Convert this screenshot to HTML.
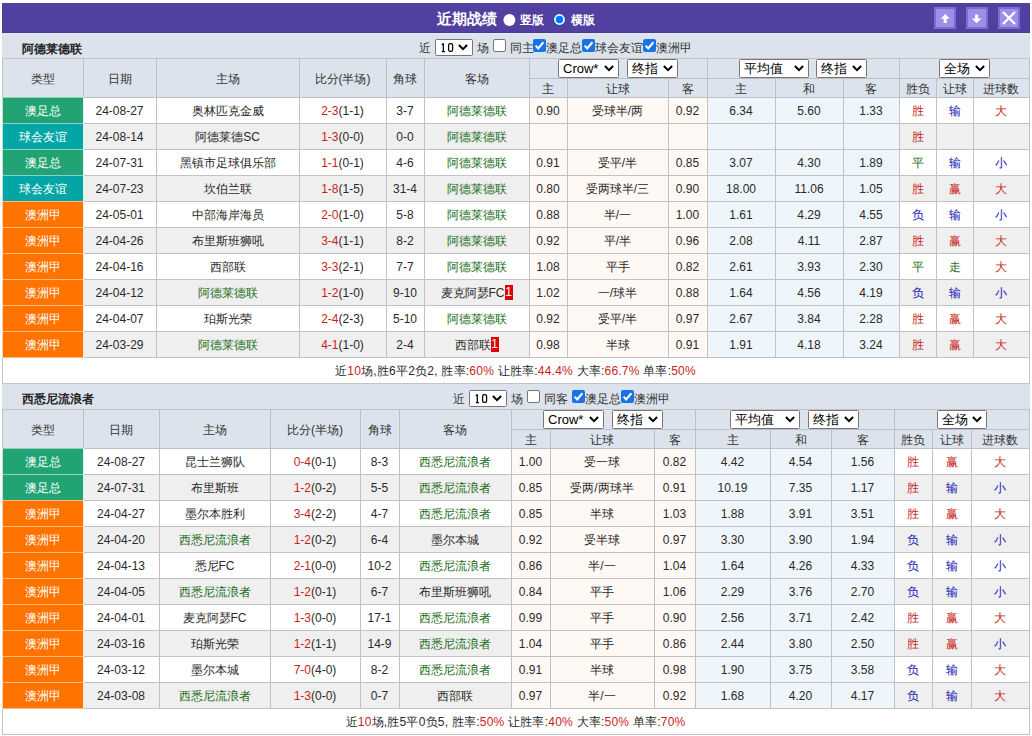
<!DOCTYPE html><html><head><meta charset="utf-8"><style>
html,body{margin:0;padding:0;background:#fff;width:1032px;height:736px;overflow:hidden;font-family:"Liberation Sans", sans-serif}
.a{position:absolute}
.t{position:absolute;display:flex;align-items:center;justify-content:center;font-size:12px;color:#2a2a2a;white-space:nowrap}
.r{color:#C81E22}.b{color:#1414B4}.g{color:#1C6E1C}
.rc{display:inline-block;position:relative;top:-1px;background:#E00000;color:#fff;width:8px;height:15px;line-height:15px;text-align:center;font-size:12px}
</style></head><body>
<div class="a" style="left:2px;top:3px;width:1028px;height:29px;background:#5240A0;"></div>
<div class="a" style="left:2px;top:32px;width:1028px;height:1px;background:#483C86;"></div>
<div class="a" style="left:2px;top:33px;width:1028px;height:1px;background:#E6E6FC;"></div>
<div class="a" style="left:2px;top:34px;width:1028px;height:700px;background:#DCE3EC;"></div>
<div class="a" style="left:437px;top:4px;height:30px;line-height:30px;font-size:15px;font-weight:bold;color:#fff;white-space:nowrap">近期战绩</div>
<svg class="a" style="left:500px;top:10px" width="20" height="20" viewBox="0 0 20 20"><circle cx="9.4" cy="9.9" r="6" fill="#fff"/></svg>
<div class="a" style="left:520px;top:5px;height:30px;line-height:30px;font-size:12px;color:#2a2a2a;white-space:nowrap;color:#fff;font-weight:bold">竖版</div>
<svg class="a" style="left:550px;top:10px" width="20" height="20" viewBox="0 0 20 20"><circle cx="9.5" cy="9.5" r="6.5" fill="#2450C8" opacity="0.7"/><circle cx="9.5" cy="9.5" r="5.4" fill="#EFFFFF"/><circle cx="9.5" cy="9.5" r="3.7" fill="#0075FF"/></svg>
<div class="a" style="left:571px;top:5px;height:30px;line-height:30px;font-size:12px;color:#2a2a2a;white-space:nowrap;color:#fff;font-weight:bold">横版</div>
<div class="a" style="left:934px;top:7px;width:22px;height:22px;box-sizing:border-box;background:#9E8EEA;border:2px solid #7E6CCC"></div>
<svg class="a" style="left:934px;top:7px" width="22" height="22" viewBox="0 0 22 22"><polygon points="11.2,7 15.8,11.8 12.7,11.8 12.7,16 9.7,16 9.7,11.8 6.6,11.8" fill="#fff"/></svg>
<div class="a" style="left:966px;top:7px;width:22px;height:22px;box-sizing:border-box;background:#9E8EEA;border:2px solid #7E6CCC"></div>
<svg class="a" style="left:966px;top:7px" width="22" height="22" viewBox="0 0 22 22"><polygon points="10.6,16.2 15.4,11.4 12.1,11.4 12.1,7.5 9.1,7.5 9.1,11.4 5.8,11.4" fill="#fff"/></svg>
<div class="a" style="left:998px;top:7px;width:22px;height:22px;box-sizing:border-box;background:#9E8EEA;border:2px solid #7E6CCC"></div>
<svg class="a" style="left:998px;top:7px" width="22" height="22" viewBox="0 0 22 22"><path d="M5,5 L17,17 M17,5 L5,17" stroke="#fff" stroke-width="2.3"/></svg>
<div class="a" style="left:2px;top:58px;width:1027px;height:39px;background:#DCE3EC;"></div>
<div class="a" style="left:2px;top:97px;width:1027px;height:26px;background:#FFFFFF;"></div>
<div class="a" style="left:529px;top:97px;width:178px;height:26px;background:#FFF9F5;"></div>
<div class="a" style="left:707px;top:97px;width:192px;height:26px;background:#EFF6FB;"></div>
<div class="a" style="left:2px;top:123px;width:1027px;height:26px;background:#EFEFEF;"></div>
<div class="a" style="left:529px;top:123px;width:178px;height:26px;background:#FFF9F5;"></div>
<div class="a" style="left:707px;top:123px;width:192px;height:26px;background:#EFF6FB;"></div>
<div class="a" style="left:2px;top:149px;width:1027px;height:26px;background:#FFFFFF;"></div>
<div class="a" style="left:529px;top:149px;width:178px;height:26px;background:#FFF9F5;"></div>
<div class="a" style="left:707px;top:149px;width:192px;height:26px;background:#EFF6FB;"></div>
<div class="a" style="left:2px;top:175px;width:1027px;height:26px;background:#EFEFEF;"></div>
<div class="a" style="left:529px;top:175px;width:178px;height:26px;background:#FFF9F5;"></div>
<div class="a" style="left:707px;top:175px;width:192px;height:26px;background:#EFF6FB;"></div>
<div class="a" style="left:2px;top:201px;width:1027px;height:26px;background:#FFFFFF;"></div>
<div class="a" style="left:529px;top:201px;width:178px;height:26px;background:#FFF9F5;"></div>
<div class="a" style="left:707px;top:201px;width:192px;height:26px;background:#EFF6FB;"></div>
<div class="a" style="left:2px;top:227px;width:1027px;height:26px;background:#EFEFEF;"></div>
<div class="a" style="left:529px;top:227px;width:178px;height:26px;background:#FFF9F5;"></div>
<div class="a" style="left:707px;top:227px;width:192px;height:26px;background:#EFF6FB;"></div>
<div class="a" style="left:2px;top:253px;width:1027px;height:26px;background:#FFFFFF;"></div>
<div class="a" style="left:529px;top:253px;width:178px;height:26px;background:#FFF9F5;"></div>
<div class="a" style="left:707px;top:253px;width:192px;height:26px;background:#EFF6FB;"></div>
<div class="a" style="left:2px;top:279px;width:1027px;height:26px;background:#EFEFEF;"></div>
<div class="a" style="left:529px;top:279px;width:178px;height:26px;background:#FFF9F5;"></div>
<div class="a" style="left:707px;top:279px;width:192px;height:26px;background:#EFF6FB;"></div>
<div class="a" style="left:2px;top:305px;width:1027px;height:26px;background:#FFFFFF;"></div>
<div class="a" style="left:529px;top:305px;width:178px;height:26px;background:#FFF9F5;"></div>
<div class="a" style="left:707px;top:305px;width:192px;height:26px;background:#EFF6FB;"></div>
<div class="a" style="left:2px;top:331px;width:1027px;height:26px;background:#EFEFEF;"></div>
<div class="a" style="left:529px;top:331px;width:178px;height:26px;background:#FFF9F5;"></div>
<div class="a" style="left:707px;top:331px;width:192px;height:26px;background:#EFF6FB;"></div>
<div class="a" style="left:2px;top:357px;width:1027px;height:26px;background:#FFFFFF;"></div>
<div class="a" style="left:2px;top:58px;width:1028px;height:1px;background:#C2C2C2;"></div>
<div class="a" style="left:2px;top:97px;width:1028px;height:1px;background:#C2C2C2;"></div>
<div class="a" style="left:2px;top:123px;width:1028px;height:1px;background:#C2C2C2;"></div>
<div class="a" style="left:2px;top:149px;width:1028px;height:1px;background:#C2C2C2;"></div>
<div class="a" style="left:2px;top:175px;width:1028px;height:1px;background:#C2C2C2;"></div>
<div class="a" style="left:2px;top:201px;width:1028px;height:1px;background:#C2C2C2;"></div>
<div class="a" style="left:2px;top:227px;width:1028px;height:1px;background:#C2C2C2;"></div>
<div class="a" style="left:2px;top:253px;width:1028px;height:1px;background:#C2C2C2;"></div>
<div class="a" style="left:2px;top:279px;width:1028px;height:1px;background:#C2C2C2;"></div>
<div class="a" style="left:2px;top:305px;width:1028px;height:1px;background:#C2C2C2;"></div>
<div class="a" style="left:2px;top:331px;width:1028px;height:1px;background:#C2C2C2;"></div>
<div class="a" style="left:2px;top:357px;width:1028px;height:1px;background:#C2C2C2;"></div>
<div class="a" style="left:2px;top:383px;width:1028px;height:1px;background:#C2C2C2;"></div>
<div class="a" style="left:529px;top:78px;width:500px;height:1px;background:#C2C2C2;"></div>
<div class="a" style="left:2px;top:58px;width:1px;height:326px;background:#C2C2C2;"></div>
<div class="a" style="left:83px;top:58px;width:1px;height:39px;background:#B9C0CA;"></div>
<div class="a" style="left:83px;top:98px;width:1px;height:259px;background:#C2C2C2;"></div>
<div class="a" style="left:156px;top:58px;width:1px;height:39px;background:#B9C0CA;"></div>
<div class="a" style="left:156px;top:98px;width:1px;height:259px;background:#C2C2C2;"></div>
<div class="a" style="left:299px;top:58px;width:1px;height:39px;background:#B9C0CA;"></div>
<div class="a" style="left:299px;top:98px;width:1px;height:259px;background:#C2C2C2;"></div>
<div class="a" style="left:386px;top:58px;width:1px;height:39px;background:#B9C0CA;"></div>
<div class="a" style="left:386px;top:98px;width:1px;height:259px;background:#C2C2C2;"></div>
<div class="a" style="left:424px;top:58px;width:1px;height:39px;background:#B9C0CA;"></div>
<div class="a" style="left:424px;top:98px;width:1px;height:259px;background:#C2C2C2;"></div>
<div class="a" style="left:529px;top:58px;width:1px;height:39px;background:#B9C0CA;"></div>
<div class="a" style="left:529px;top:98px;width:1px;height:259px;background:#C2C2C2;"></div>
<div class="a" style="left:567px;top:78px;width:1px;height:19px;background:#B9C0CA;"></div>
<div class="a" style="left:567px;top:98px;width:1px;height:259px;background:#C2C2C2;"></div>
<div class="a" style="left:668px;top:78px;width:1px;height:19px;background:#B9C0CA;"></div>
<div class="a" style="left:668px;top:98px;width:1px;height:259px;background:#C2C2C2;"></div>
<div class="a" style="left:707px;top:58px;width:1px;height:39px;background:#B9C0CA;"></div>
<div class="a" style="left:707px;top:98px;width:1px;height:259px;background:#C2C2C2;"></div>
<div class="a" style="left:775px;top:78px;width:1px;height:19px;background:#B9C0CA;"></div>
<div class="a" style="left:775px;top:98px;width:1px;height:259px;background:#C2C2C2;"></div>
<div class="a" style="left:843px;top:78px;width:1px;height:19px;background:#B9C0CA;"></div>
<div class="a" style="left:843px;top:98px;width:1px;height:259px;background:#C2C2C2;"></div>
<div class="a" style="left:899px;top:58px;width:1px;height:39px;background:#B9C0CA;"></div>
<div class="a" style="left:899px;top:98px;width:1px;height:259px;background:#C2C2C2;"></div>
<div class="a" style="left:936px;top:78px;width:1px;height:19px;background:#B9C0CA;"></div>
<div class="a" style="left:936px;top:98px;width:1px;height:259px;background:#C2C2C2;"></div>
<div class="a" style="left:973px;top:78px;width:1px;height:19px;background:#B9C0CA;"></div>
<div class="a" style="left:973px;top:98px;width:1px;height:259px;background:#C2C2C2;"></div>
<div class="a" style="left:1029px;top:58px;width:1px;height:326px;background:#C2C2C2;"></div>
<div class="a" style="left:3px;top:97px;width:1026px;height:1px;background:#B9C0CA;"></div>
<div class="a" style="left:530px;top:78px;width:499px;height:1px;background:#B9C0CA;"></div>
<div class="a" style="left:2px;top:97px;width:82px;height:27px;background:#21A374;"></div>
<div class="a" style="left:2px;top:97px;width:1px;height:27px;background:rgba(255,255,255,0.7);"></div>
<div class="a" style="left:83px;top:97px;width:1px;height:27px;background:rgba(255,255,255,0.85);"></div>
<div class="a" style="left:3px;top:97px;width:80px;height:1px;background:rgba(255,255,255,0.5);"></div>
<div class="a" style="left:2px;top:123px;width:82px;height:27px;background:#03A5A5;"></div>
<div class="a" style="left:2px;top:123px;width:1px;height:27px;background:rgba(255,255,255,0.7);"></div>
<div class="a" style="left:83px;top:123px;width:1px;height:27px;background:rgba(255,255,255,0.85);"></div>
<div class="a" style="left:3px;top:123px;width:80px;height:1px;background:rgba(255,255,255,0.5);"></div>
<div class="a" style="left:2px;top:149px;width:82px;height:27px;background:#21A374;"></div>
<div class="a" style="left:2px;top:149px;width:1px;height:27px;background:rgba(255,255,255,0.7);"></div>
<div class="a" style="left:83px;top:149px;width:1px;height:27px;background:rgba(255,255,255,0.85);"></div>
<div class="a" style="left:3px;top:149px;width:80px;height:1px;background:rgba(255,255,255,0.5);"></div>
<div class="a" style="left:2px;top:175px;width:82px;height:27px;background:#03A5A5;"></div>
<div class="a" style="left:2px;top:175px;width:1px;height:27px;background:rgba(255,255,255,0.7);"></div>
<div class="a" style="left:83px;top:175px;width:1px;height:27px;background:rgba(255,255,255,0.85);"></div>
<div class="a" style="left:3px;top:175px;width:80px;height:1px;background:rgba(255,255,255,0.5);"></div>
<div class="a" style="left:2px;top:201px;width:82px;height:27px;background:#FF7300;"></div>
<div class="a" style="left:2px;top:201px;width:1px;height:27px;background:rgba(255,255,255,0.7);"></div>
<div class="a" style="left:83px;top:201px;width:1px;height:27px;background:rgba(255,255,255,0.85);"></div>
<div class="a" style="left:3px;top:201px;width:80px;height:1px;background:rgba(255,255,255,0.5);"></div>
<div class="a" style="left:2px;top:227px;width:82px;height:27px;background:#FF7300;"></div>
<div class="a" style="left:2px;top:227px;width:1px;height:27px;background:rgba(255,255,255,0.7);"></div>
<div class="a" style="left:83px;top:227px;width:1px;height:27px;background:rgba(255,255,255,0.85);"></div>
<div class="a" style="left:3px;top:227px;width:80px;height:1px;background:rgba(255,255,255,0.5);"></div>
<div class="a" style="left:2px;top:253px;width:82px;height:27px;background:#FF7300;"></div>
<div class="a" style="left:2px;top:253px;width:1px;height:27px;background:rgba(255,255,255,0.7);"></div>
<div class="a" style="left:83px;top:253px;width:1px;height:27px;background:rgba(255,255,255,0.85);"></div>
<div class="a" style="left:3px;top:253px;width:80px;height:1px;background:rgba(255,255,255,0.5);"></div>
<div class="a" style="left:2px;top:279px;width:82px;height:27px;background:#FF7300;"></div>
<div class="a" style="left:2px;top:279px;width:1px;height:27px;background:rgba(255,255,255,0.7);"></div>
<div class="a" style="left:83px;top:279px;width:1px;height:27px;background:rgba(255,255,255,0.85);"></div>
<div class="a" style="left:3px;top:279px;width:80px;height:1px;background:rgba(255,255,255,0.5);"></div>
<div class="a" style="left:2px;top:305px;width:82px;height:27px;background:#FF7300;"></div>
<div class="a" style="left:2px;top:305px;width:1px;height:27px;background:rgba(255,255,255,0.7);"></div>
<div class="a" style="left:83px;top:305px;width:1px;height:27px;background:rgba(255,255,255,0.85);"></div>
<div class="a" style="left:3px;top:305px;width:80px;height:1px;background:rgba(255,255,255,0.5);"></div>
<div class="a" style="left:2px;top:331px;width:82px;height:27px;background:#FF7300;"></div>
<div class="a" style="left:2px;top:331px;width:1px;height:27px;background:rgba(255,255,255,0.7);"></div>
<div class="a" style="left:83px;top:331px;width:1px;height:27px;background:rgba(255,255,255,0.85);"></div>
<div class="a" style="left:3px;top:331px;width:80px;height:1px;background:rgba(255,255,255,0.5);"></div>
<div class="a" style="left:3px;top:357px;width:80px;height:1px;background:rgba(255,255,255,0.5);"></div>
<div class="t" style="left:2px;top:60px;width:81px;height:39px;color:#333"><span>类型</span></div>
<div class="t" style="left:83px;top:60px;width:73px;height:39px;color:#333"><span>日期</span></div>
<div class="t" style="left:156px;top:60px;width:143px;height:39px;color:#333"><span>主场</span></div>
<div class="t" style="left:299px;top:60px;width:87px;height:39px;color:#333"><span>比分(半场)</span></div>
<div class="t" style="left:386px;top:60px;width:38px;height:39px;color:#333"><span>角球</span></div>
<div class="t" style="left:424px;top:60px;width:105px;height:39px;color:#333"><span>客场</span></div>
<div class="t" style="left:529px;top:80px;width:38px;height:19px;color:#333"><span>主</span></div>
<div class="t" style="left:567px;top:80px;width:101px;height:19px;color:#333"><span>让球</span></div>
<div class="t" style="left:668px;top:80px;width:39px;height:19px;color:#333"><span>客</span></div>
<div class="t" style="left:707px;top:80px;width:68px;height:19px;color:#333"><span>主</span></div>
<div class="t" style="left:775px;top:80px;width:68px;height:19px;color:#333"><span>和</span></div>
<div class="t" style="left:843px;top:80px;width:56px;height:19px;color:#333"><span>客</span></div>
<div class="t" style="left:899px;top:80px;width:37px;height:19px;color:#333"><span>胜负</span></div>
<div class="t" style="left:936px;top:80px;width:37px;height:19px;color:#333"><span>让球</span></div>
<div class="t" style="left:973px;top:80px;width:56px;height:19px;color:#333"><span>进球数</span></div>
<div class="t" style="left:2px;top:98px;width:81px;height:26px;color:#fff"><span>澳足总</span></div>
<div class="t" style="left:83px;top:98px;width:73px;height:26px;"><span>24-08-27</span></div>
<div class="t" style="left:156px;top:98px;width:143px;height:26px;"><span>奥林匹克金威</span></div>
<div class="t" style="left:299px;top:98px;width:87px;height:26px;"><span><span class="r">2-3</span>(1-1)</span></div>
<div class="t" style="left:386px;top:98px;width:38px;height:26px;"><span>3-7</span></div>
<div class="t" style="left:424px;top:98px;width:105px;height:26px;"><span><span class="g">阿德莱德联</span></span></div>
<div class="t" style="left:529px;top:98px;width:38px;height:26px;"><span>0.90</span></div>
<div class="t" style="left:567px;top:98px;width:101px;height:26px;"><span>受球半/两</span></div>
<div class="t" style="left:668px;top:98px;width:39px;height:26px;"><span>0.92</span></div>
<div class="t" style="left:707px;top:98px;width:68px;height:26px;"><span>6.34</span></div>
<div class="t" style="left:775px;top:98px;width:68px;height:26px;"><span>5.60</span></div>
<div class="t" style="left:843px;top:98px;width:56px;height:26px;"><span>1.33</span></div>
<div class="t" style="left:899px;top:98px;width:37px;height:26px;"><span><span class="r">胜</span></span></div>
<div class="t" style="left:936px;top:98px;width:37px;height:26px;"><span><span class="b">输</span></span></div>
<div class="t" style="left:973px;top:98px;width:56px;height:26px;"><span><span class="r">大</span></span></div>
<div class="t" style="left:2px;top:124px;width:81px;height:26px;color:#fff"><span>球会友谊</span></div>
<div class="t" style="left:83px;top:124px;width:73px;height:26px;"><span>24-08-14</span></div>
<div class="t" style="left:156px;top:124px;width:143px;height:26px;"><span>阿德莱德SC</span></div>
<div class="t" style="left:299px;top:124px;width:87px;height:26px;"><span><span class="r">1-3</span>(0-0)</span></div>
<div class="t" style="left:386px;top:124px;width:38px;height:26px;"><span>0-0</span></div>
<div class="t" style="left:424px;top:124px;width:105px;height:26px;"><span><span class="g">阿德莱德联</span></span></div>
<div class="t" style="left:529px;top:124px;width:38px;height:26px;"><span></span></div>
<div class="t" style="left:567px;top:124px;width:101px;height:26px;"><span></span></div>
<div class="t" style="left:668px;top:124px;width:39px;height:26px;"><span></span></div>
<div class="t" style="left:707px;top:124px;width:68px;height:26px;"><span></span></div>
<div class="t" style="left:775px;top:124px;width:68px;height:26px;"><span></span></div>
<div class="t" style="left:843px;top:124px;width:56px;height:26px;"><span></span></div>
<div class="t" style="left:899px;top:124px;width:37px;height:26px;"><span><span class="r">胜</span></span></div>
<div class="t" style="left:936px;top:124px;width:37px;height:26px;"><span></span></div>
<div class="t" style="left:973px;top:124px;width:56px;height:26px;"><span></span></div>
<div class="t" style="left:2px;top:150px;width:81px;height:26px;color:#fff"><span>澳足总</span></div>
<div class="t" style="left:83px;top:150px;width:73px;height:26px;"><span>24-07-31</span></div>
<div class="t" style="left:156px;top:150px;width:143px;height:26px;"><span>黑镇市足球俱乐部</span></div>
<div class="t" style="left:299px;top:150px;width:87px;height:26px;"><span><span class="r">1-1</span>(0-1)</span></div>
<div class="t" style="left:386px;top:150px;width:38px;height:26px;"><span>4-6</span></div>
<div class="t" style="left:424px;top:150px;width:105px;height:26px;"><span><span class="g">阿德莱德联</span></span></div>
<div class="t" style="left:529px;top:150px;width:38px;height:26px;"><span>0.91</span></div>
<div class="t" style="left:567px;top:150px;width:101px;height:26px;"><span>受平/半</span></div>
<div class="t" style="left:668px;top:150px;width:39px;height:26px;"><span>0.85</span></div>
<div class="t" style="left:707px;top:150px;width:68px;height:26px;"><span>3.07</span></div>
<div class="t" style="left:775px;top:150px;width:68px;height:26px;"><span>4.30</span></div>
<div class="t" style="left:843px;top:150px;width:56px;height:26px;"><span>1.89</span></div>
<div class="t" style="left:899px;top:150px;width:37px;height:26px;"><span><span class="g">平</span></span></div>
<div class="t" style="left:936px;top:150px;width:37px;height:26px;"><span><span class="b">输</span></span></div>
<div class="t" style="left:973px;top:150px;width:56px;height:26px;"><span><span class="b">小</span></span></div>
<div class="t" style="left:2px;top:176px;width:81px;height:26px;color:#fff"><span>球会友谊</span></div>
<div class="t" style="left:83px;top:176px;width:73px;height:26px;"><span>24-07-23</span></div>
<div class="t" style="left:156px;top:176px;width:143px;height:26px;"><span>坎伯兰联</span></div>
<div class="t" style="left:299px;top:176px;width:87px;height:26px;"><span><span class="r">1-8</span>(1-5)</span></div>
<div class="t" style="left:386px;top:176px;width:38px;height:26px;"><span>31-4</span></div>
<div class="t" style="left:424px;top:176px;width:105px;height:26px;"><span><span class="g">阿德莱德联</span></span></div>
<div class="t" style="left:529px;top:176px;width:38px;height:26px;"><span>0.80</span></div>
<div class="t" style="left:567px;top:176px;width:101px;height:26px;"><span>受两球半/三</span></div>
<div class="t" style="left:668px;top:176px;width:39px;height:26px;"><span>0.90</span></div>
<div class="t" style="left:707px;top:176px;width:68px;height:26px;"><span>18.00</span></div>
<div class="t" style="left:775px;top:176px;width:68px;height:26px;"><span>11.06</span></div>
<div class="t" style="left:843px;top:176px;width:56px;height:26px;"><span>1.05</span></div>
<div class="t" style="left:899px;top:176px;width:37px;height:26px;"><span><span class="r">胜</span></span></div>
<div class="t" style="left:936px;top:176px;width:37px;height:26px;"><span><span class="r">赢</span></span></div>
<div class="t" style="left:973px;top:176px;width:56px;height:26px;"><span><span class="r">大</span></span></div>
<div class="t" style="left:2px;top:202px;width:81px;height:26px;color:#fff"><span>澳洲甲</span></div>
<div class="t" style="left:83px;top:202px;width:73px;height:26px;"><span>24-05-01</span></div>
<div class="t" style="left:156px;top:202px;width:143px;height:26px;"><span>中部海岸海员</span></div>
<div class="t" style="left:299px;top:202px;width:87px;height:26px;"><span><span class="r">2-0</span>(1-0)</span></div>
<div class="t" style="left:386px;top:202px;width:38px;height:26px;"><span>5-8</span></div>
<div class="t" style="left:424px;top:202px;width:105px;height:26px;"><span><span class="g">阿德莱德联</span></span></div>
<div class="t" style="left:529px;top:202px;width:38px;height:26px;"><span>0.88</span></div>
<div class="t" style="left:567px;top:202px;width:101px;height:26px;"><span>半/一</span></div>
<div class="t" style="left:668px;top:202px;width:39px;height:26px;"><span>1.00</span></div>
<div class="t" style="left:707px;top:202px;width:68px;height:26px;"><span>1.61</span></div>
<div class="t" style="left:775px;top:202px;width:68px;height:26px;"><span>4.29</span></div>
<div class="t" style="left:843px;top:202px;width:56px;height:26px;"><span>4.55</span></div>
<div class="t" style="left:899px;top:202px;width:37px;height:26px;"><span><span class="b">负</span></span></div>
<div class="t" style="left:936px;top:202px;width:37px;height:26px;"><span><span class="b">输</span></span></div>
<div class="t" style="left:973px;top:202px;width:56px;height:26px;"><span><span class="b">小</span></span></div>
<div class="t" style="left:2px;top:228px;width:81px;height:26px;color:#fff"><span>澳洲甲</span></div>
<div class="t" style="left:83px;top:228px;width:73px;height:26px;"><span>24-04-26</span></div>
<div class="t" style="left:156px;top:228px;width:143px;height:26px;"><span>布里斯班狮吼</span></div>
<div class="t" style="left:299px;top:228px;width:87px;height:26px;"><span><span class="r">3-4</span>(1-1)</span></div>
<div class="t" style="left:386px;top:228px;width:38px;height:26px;"><span>8-2</span></div>
<div class="t" style="left:424px;top:228px;width:105px;height:26px;"><span><span class="g">阿德莱德联</span></span></div>
<div class="t" style="left:529px;top:228px;width:38px;height:26px;"><span>0.92</span></div>
<div class="t" style="left:567px;top:228px;width:101px;height:26px;"><span>平/半</span></div>
<div class="t" style="left:668px;top:228px;width:39px;height:26px;"><span>0.96</span></div>
<div class="t" style="left:707px;top:228px;width:68px;height:26px;"><span>2.08</span></div>
<div class="t" style="left:775px;top:228px;width:68px;height:26px;"><span>4.11</span></div>
<div class="t" style="left:843px;top:228px;width:56px;height:26px;"><span>2.87</span></div>
<div class="t" style="left:899px;top:228px;width:37px;height:26px;"><span><span class="r">胜</span></span></div>
<div class="t" style="left:936px;top:228px;width:37px;height:26px;"><span><span class="r">赢</span></span></div>
<div class="t" style="left:973px;top:228px;width:56px;height:26px;"><span><span class="r">大</span></span></div>
<div class="t" style="left:2px;top:254px;width:81px;height:26px;color:#fff"><span>澳洲甲</span></div>
<div class="t" style="left:83px;top:254px;width:73px;height:26px;"><span>24-04-16</span></div>
<div class="t" style="left:156px;top:254px;width:143px;height:26px;"><span>西部联</span></div>
<div class="t" style="left:299px;top:254px;width:87px;height:26px;"><span><span class="r">3-3</span>(2-1)</span></div>
<div class="t" style="left:386px;top:254px;width:38px;height:26px;"><span>7-7</span></div>
<div class="t" style="left:424px;top:254px;width:105px;height:26px;"><span><span class="g">阿德莱德联</span></span></div>
<div class="t" style="left:529px;top:254px;width:38px;height:26px;"><span>1.08</span></div>
<div class="t" style="left:567px;top:254px;width:101px;height:26px;"><span>平手</span></div>
<div class="t" style="left:668px;top:254px;width:39px;height:26px;"><span>0.82</span></div>
<div class="t" style="left:707px;top:254px;width:68px;height:26px;"><span>2.61</span></div>
<div class="t" style="left:775px;top:254px;width:68px;height:26px;"><span>3.93</span></div>
<div class="t" style="left:843px;top:254px;width:56px;height:26px;"><span>2.30</span></div>
<div class="t" style="left:899px;top:254px;width:37px;height:26px;"><span><span class="g">平</span></span></div>
<div class="t" style="left:936px;top:254px;width:37px;height:26px;"><span><span class="g">走</span></span></div>
<div class="t" style="left:973px;top:254px;width:56px;height:26px;"><span><span class="r">大</span></span></div>
<div class="t" style="left:2px;top:280px;width:81px;height:26px;color:#fff"><span>澳洲甲</span></div>
<div class="t" style="left:83px;top:280px;width:73px;height:26px;"><span>24-04-12</span></div>
<div class="t" style="left:156px;top:280px;width:143px;height:26px;"><span><span class="g">阿德莱德联</span></span></div>
<div class="t" style="left:299px;top:280px;width:87px;height:26px;"><span><span class="r">1-2</span>(1-0)</span></div>
<div class="t" style="left:386px;top:280px;width:38px;height:26px;"><span>9-10</span></div>
<div class="t" style="left:424px;top:280px;width:105px;height:26px;"><span>麦克阿瑟FC<span class="rc">1</span></span></div>
<div class="t" style="left:529px;top:280px;width:38px;height:26px;"><span>1.02</span></div>
<div class="t" style="left:567px;top:280px;width:101px;height:26px;"><span>一/球半</span></div>
<div class="t" style="left:668px;top:280px;width:39px;height:26px;"><span>0.88</span></div>
<div class="t" style="left:707px;top:280px;width:68px;height:26px;"><span>1.64</span></div>
<div class="t" style="left:775px;top:280px;width:68px;height:26px;"><span>4.56</span></div>
<div class="t" style="left:843px;top:280px;width:56px;height:26px;"><span>4.19</span></div>
<div class="t" style="left:899px;top:280px;width:37px;height:26px;"><span><span class="b">负</span></span></div>
<div class="t" style="left:936px;top:280px;width:37px;height:26px;"><span><span class="b">输</span></span></div>
<div class="t" style="left:973px;top:280px;width:56px;height:26px;"><span><span class="b">小</span></span></div>
<div class="t" style="left:2px;top:306px;width:81px;height:26px;color:#fff"><span>澳洲甲</span></div>
<div class="t" style="left:83px;top:306px;width:73px;height:26px;"><span>24-04-07</span></div>
<div class="t" style="left:156px;top:306px;width:143px;height:26px;"><span>珀斯光荣</span></div>
<div class="t" style="left:299px;top:306px;width:87px;height:26px;"><span><span class="r">2-4</span>(2-3)</span></div>
<div class="t" style="left:386px;top:306px;width:38px;height:26px;"><span>5-10</span></div>
<div class="t" style="left:424px;top:306px;width:105px;height:26px;"><span><span class="g">阿德莱德联</span></span></div>
<div class="t" style="left:529px;top:306px;width:38px;height:26px;"><span>0.92</span></div>
<div class="t" style="left:567px;top:306px;width:101px;height:26px;"><span>受平/半</span></div>
<div class="t" style="left:668px;top:306px;width:39px;height:26px;"><span>0.97</span></div>
<div class="t" style="left:707px;top:306px;width:68px;height:26px;"><span>2.67</span></div>
<div class="t" style="left:775px;top:306px;width:68px;height:26px;"><span>3.84</span></div>
<div class="t" style="left:843px;top:306px;width:56px;height:26px;"><span>2.28</span></div>
<div class="t" style="left:899px;top:306px;width:37px;height:26px;"><span><span class="r">胜</span></span></div>
<div class="t" style="left:936px;top:306px;width:37px;height:26px;"><span><span class="r">赢</span></span></div>
<div class="t" style="left:973px;top:306px;width:56px;height:26px;"><span><span class="r">大</span></span></div>
<div class="t" style="left:2px;top:332px;width:81px;height:26px;color:#fff"><span>澳洲甲</span></div>
<div class="t" style="left:83px;top:332px;width:73px;height:26px;"><span>24-03-29</span></div>
<div class="t" style="left:156px;top:332px;width:143px;height:26px;"><span><span class="g">阿德莱德联</span></span></div>
<div class="t" style="left:299px;top:332px;width:87px;height:26px;"><span><span class="r">4-1</span>(1-0)</span></div>
<div class="t" style="left:386px;top:332px;width:38px;height:26px;"><span>2-4</span></div>
<div class="t" style="left:424px;top:332px;width:105px;height:26px;"><span>西部联<span class="rc">1</span></span></div>
<div class="t" style="left:529px;top:332px;width:38px;height:26px;"><span>0.98</span></div>
<div class="t" style="left:567px;top:332px;width:101px;height:26px;"><span>半球</span></div>
<div class="t" style="left:668px;top:332px;width:39px;height:26px;"><span>0.91</span></div>
<div class="t" style="left:707px;top:332px;width:68px;height:26px;"><span>1.91</span></div>
<div class="t" style="left:775px;top:332px;width:68px;height:26px;"><span>4.18</span></div>
<div class="t" style="left:843px;top:332px;width:56px;height:26px;"><span>3.24</span></div>
<div class="t" style="left:899px;top:332px;width:37px;height:26px;"><span><span class="r">胜</span></span></div>
<div class="t" style="left:936px;top:332px;width:37px;height:26px;"><span><span class="r">赢</span></span></div>
<div class="t" style="left:973px;top:332px;width:56px;height:26px;"><span><span class="r">大</span></span></div>
<div class="t" style="left:2px;top:358px;width:1027px;height:26px;letter-spacing:0.22px"><span>近<span class="r">10</span>场,胜6平2负2, 胜率:<span class="r">60%</span> 让胜率:<span class="r">44.4%</span> 大率:<span class="r">66.7%</span> 单率:<span class="r">50%</span></span></div>
<div class="a" style="left:2px;top:409px;width:1027px;height:39px;background:#DCE3EC;"></div>
<div class="a" style="left:2px;top:448px;width:1027px;height:26px;background:#FFFFFF;"></div>
<div class="a" style="left:511px;top:448px;width:184px;height:26px;background:#FFF9F5;"></div>
<div class="a" style="left:695px;top:448px;width:199px;height:26px;background:#EFF6FB;"></div>
<div class="a" style="left:2px;top:474px;width:1027px;height:26px;background:#EFEFEF;"></div>
<div class="a" style="left:511px;top:474px;width:184px;height:26px;background:#FFF9F5;"></div>
<div class="a" style="left:695px;top:474px;width:199px;height:26px;background:#EFF6FB;"></div>
<div class="a" style="left:2px;top:500px;width:1027px;height:26px;background:#FFFFFF;"></div>
<div class="a" style="left:511px;top:500px;width:184px;height:26px;background:#FFF9F5;"></div>
<div class="a" style="left:695px;top:500px;width:199px;height:26px;background:#EFF6FB;"></div>
<div class="a" style="left:2px;top:526px;width:1027px;height:26px;background:#EFEFEF;"></div>
<div class="a" style="left:511px;top:526px;width:184px;height:26px;background:#FFF9F5;"></div>
<div class="a" style="left:695px;top:526px;width:199px;height:26px;background:#EFF6FB;"></div>
<div class="a" style="left:2px;top:552px;width:1027px;height:26px;background:#FFFFFF;"></div>
<div class="a" style="left:511px;top:552px;width:184px;height:26px;background:#FFF9F5;"></div>
<div class="a" style="left:695px;top:552px;width:199px;height:26px;background:#EFF6FB;"></div>
<div class="a" style="left:2px;top:578px;width:1027px;height:26px;background:#EFEFEF;"></div>
<div class="a" style="left:511px;top:578px;width:184px;height:26px;background:#FFF9F5;"></div>
<div class="a" style="left:695px;top:578px;width:199px;height:26px;background:#EFF6FB;"></div>
<div class="a" style="left:2px;top:604px;width:1027px;height:26px;background:#FFFFFF;"></div>
<div class="a" style="left:511px;top:604px;width:184px;height:26px;background:#FFF9F5;"></div>
<div class="a" style="left:695px;top:604px;width:199px;height:26px;background:#EFF6FB;"></div>
<div class="a" style="left:2px;top:630px;width:1027px;height:26px;background:#EFEFEF;"></div>
<div class="a" style="left:511px;top:630px;width:184px;height:26px;background:#FFF9F5;"></div>
<div class="a" style="left:695px;top:630px;width:199px;height:26px;background:#EFF6FB;"></div>
<div class="a" style="left:2px;top:656px;width:1027px;height:26px;background:#FFFFFF;"></div>
<div class="a" style="left:511px;top:656px;width:184px;height:26px;background:#FFF9F5;"></div>
<div class="a" style="left:695px;top:656px;width:199px;height:26px;background:#EFF6FB;"></div>
<div class="a" style="left:2px;top:682px;width:1027px;height:26px;background:#EFEFEF;"></div>
<div class="a" style="left:511px;top:682px;width:184px;height:26px;background:#FFF9F5;"></div>
<div class="a" style="left:695px;top:682px;width:199px;height:26px;background:#EFF6FB;"></div>
<div class="a" style="left:2px;top:708px;width:1027px;height:26px;background:#FFFFFF;"></div>
<div class="a" style="left:2px;top:409px;width:1028px;height:1px;background:#C2C2C2;"></div>
<div class="a" style="left:2px;top:448px;width:1028px;height:1px;background:#C2C2C2;"></div>
<div class="a" style="left:2px;top:474px;width:1028px;height:1px;background:#C2C2C2;"></div>
<div class="a" style="left:2px;top:500px;width:1028px;height:1px;background:#C2C2C2;"></div>
<div class="a" style="left:2px;top:526px;width:1028px;height:1px;background:#C2C2C2;"></div>
<div class="a" style="left:2px;top:552px;width:1028px;height:1px;background:#C2C2C2;"></div>
<div class="a" style="left:2px;top:578px;width:1028px;height:1px;background:#C2C2C2;"></div>
<div class="a" style="left:2px;top:604px;width:1028px;height:1px;background:#C2C2C2;"></div>
<div class="a" style="left:2px;top:630px;width:1028px;height:1px;background:#C2C2C2;"></div>
<div class="a" style="left:2px;top:656px;width:1028px;height:1px;background:#C2C2C2;"></div>
<div class="a" style="left:2px;top:682px;width:1028px;height:1px;background:#C2C2C2;"></div>
<div class="a" style="left:2px;top:708px;width:1028px;height:1px;background:#C2C2C2;"></div>
<div class="a" style="left:2px;top:734px;width:1028px;height:1px;background:#C2C2C2;"></div>
<div class="a" style="left:511px;top:429px;width:518px;height:1px;background:#C2C2C2;"></div>
<div class="a" style="left:2px;top:409px;width:1px;height:326px;background:#C2C2C2;"></div>
<div class="a" style="left:83px;top:409px;width:1px;height:39px;background:#B9C0CA;"></div>
<div class="a" style="left:83px;top:449px;width:1px;height:259px;background:#C2C2C2;"></div>
<div class="a" style="left:159px;top:409px;width:1px;height:39px;background:#B9C0CA;"></div>
<div class="a" style="left:159px;top:449px;width:1px;height:259px;background:#C2C2C2;"></div>
<div class="a" style="left:270px;top:409px;width:1px;height:39px;background:#B9C0CA;"></div>
<div class="a" style="left:270px;top:449px;width:1px;height:259px;background:#C2C2C2;"></div>
<div class="a" style="left:360px;top:409px;width:1px;height:39px;background:#B9C0CA;"></div>
<div class="a" style="left:360px;top:449px;width:1px;height:259px;background:#C2C2C2;"></div>
<div class="a" style="left:399px;top:409px;width:1px;height:39px;background:#B9C0CA;"></div>
<div class="a" style="left:399px;top:449px;width:1px;height:259px;background:#C2C2C2;"></div>
<div class="a" style="left:511px;top:409px;width:1px;height:39px;background:#B9C0CA;"></div>
<div class="a" style="left:511px;top:449px;width:1px;height:259px;background:#C2C2C2;"></div>
<div class="a" style="left:550px;top:429px;width:1px;height:19px;background:#B9C0CA;"></div>
<div class="a" style="left:550px;top:449px;width:1px;height:259px;background:#C2C2C2;"></div>
<div class="a" style="left:654px;top:429px;width:1px;height:19px;background:#B9C0CA;"></div>
<div class="a" style="left:654px;top:449px;width:1px;height:259px;background:#C2C2C2;"></div>
<div class="a" style="left:695px;top:409px;width:1px;height:39px;background:#B9C0CA;"></div>
<div class="a" style="left:695px;top:449px;width:1px;height:259px;background:#C2C2C2;"></div>
<div class="a" style="left:770px;top:429px;width:1px;height:19px;background:#B9C0CA;"></div>
<div class="a" style="left:770px;top:449px;width:1px;height:259px;background:#C2C2C2;"></div>
<div class="a" style="left:831px;top:429px;width:1px;height:19px;background:#B9C0CA;"></div>
<div class="a" style="left:831px;top:449px;width:1px;height:259px;background:#C2C2C2;"></div>
<div class="a" style="left:894px;top:409px;width:1px;height:39px;background:#B9C0CA;"></div>
<div class="a" style="left:894px;top:449px;width:1px;height:259px;background:#C2C2C2;"></div>
<div class="a" style="left:932px;top:429px;width:1px;height:19px;background:#B9C0CA;"></div>
<div class="a" style="left:932px;top:449px;width:1px;height:259px;background:#C2C2C2;"></div>
<div class="a" style="left:971px;top:429px;width:1px;height:19px;background:#B9C0CA;"></div>
<div class="a" style="left:971px;top:449px;width:1px;height:259px;background:#C2C2C2;"></div>
<div class="a" style="left:1029px;top:409px;width:1px;height:326px;background:#C2C2C2;"></div>
<div class="a" style="left:3px;top:448px;width:1026px;height:1px;background:#B9C0CA;"></div>
<div class="a" style="left:512px;top:429px;width:517px;height:1px;background:#B9C0CA;"></div>
<div class="a" style="left:2px;top:448px;width:82px;height:27px;background:#21A374;"></div>
<div class="a" style="left:2px;top:448px;width:1px;height:27px;background:rgba(255,255,255,0.7);"></div>
<div class="a" style="left:83px;top:448px;width:1px;height:27px;background:rgba(255,255,255,0.85);"></div>
<div class="a" style="left:3px;top:448px;width:80px;height:1px;background:rgba(255,255,255,0.5);"></div>
<div class="a" style="left:2px;top:474px;width:82px;height:27px;background:#21A374;"></div>
<div class="a" style="left:2px;top:474px;width:1px;height:27px;background:rgba(255,255,255,0.7);"></div>
<div class="a" style="left:83px;top:474px;width:1px;height:27px;background:rgba(255,255,255,0.85);"></div>
<div class="a" style="left:3px;top:474px;width:80px;height:1px;background:rgba(255,255,255,0.5);"></div>
<div class="a" style="left:2px;top:500px;width:82px;height:27px;background:#FF7300;"></div>
<div class="a" style="left:2px;top:500px;width:1px;height:27px;background:rgba(255,255,255,0.7);"></div>
<div class="a" style="left:83px;top:500px;width:1px;height:27px;background:rgba(255,255,255,0.85);"></div>
<div class="a" style="left:3px;top:500px;width:80px;height:1px;background:rgba(255,255,255,0.5);"></div>
<div class="a" style="left:2px;top:526px;width:82px;height:27px;background:#FF7300;"></div>
<div class="a" style="left:2px;top:526px;width:1px;height:27px;background:rgba(255,255,255,0.7);"></div>
<div class="a" style="left:83px;top:526px;width:1px;height:27px;background:rgba(255,255,255,0.85);"></div>
<div class="a" style="left:3px;top:526px;width:80px;height:1px;background:rgba(255,255,255,0.5);"></div>
<div class="a" style="left:2px;top:552px;width:82px;height:27px;background:#FF7300;"></div>
<div class="a" style="left:2px;top:552px;width:1px;height:27px;background:rgba(255,255,255,0.7);"></div>
<div class="a" style="left:83px;top:552px;width:1px;height:27px;background:rgba(255,255,255,0.85);"></div>
<div class="a" style="left:3px;top:552px;width:80px;height:1px;background:rgba(255,255,255,0.5);"></div>
<div class="a" style="left:2px;top:578px;width:82px;height:27px;background:#FF7300;"></div>
<div class="a" style="left:2px;top:578px;width:1px;height:27px;background:rgba(255,255,255,0.7);"></div>
<div class="a" style="left:83px;top:578px;width:1px;height:27px;background:rgba(255,255,255,0.85);"></div>
<div class="a" style="left:3px;top:578px;width:80px;height:1px;background:rgba(255,255,255,0.5);"></div>
<div class="a" style="left:2px;top:604px;width:82px;height:27px;background:#FF7300;"></div>
<div class="a" style="left:2px;top:604px;width:1px;height:27px;background:rgba(255,255,255,0.7);"></div>
<div class="a" style="left:83px;top:604px;width:1px;height:27px;background:rgba(255,255,255,0.85);"></div>
<div class="a" style="left:3px;top:604px;width:80px;height:1px;background:rgba(255,255,255,0.5);"></div>
<div class="a" style="left:2px;top:630px;width:82px;height:27px;background:#FF7300;"></div>
<div class="a" style="left:2px;top:630px;width:1px;height:27px;background:rgba(255,255,255,0.7);"></div>
<div class="a" style="left:83px;top:630px;width:1px;height:27px;background:rgba(255,255,255,0.85);"></div>
<div class="a" style="left:3px;top:630px;width:80px;height:1px;background:rgba(255,255,255,0.5);"></div>
<div class="a" style="left:2px;top:656px;width:82px;height:27px;background:#FF7300;"></div>
<div class="a" style="left:2px;top:656px;width:1px;height:27px;background:rgba(255,255,255,0.7);"></div>
<div class="a" style="left:83px;top:656px;width:1px;height:27px;background:rgba(255,255,255,0.85);"></div>
<div class="a" style="left:3px;top:656px;width:80px;height:1px;background:rgba(255,255,255,0.5);"></div>
<div class="a" style="left:2px;top:682px;width:82px;height:27px;background:#FF7300;"></div>
<div class="a" style="left:2px;top:682px;width:1px;height:27px;background:rgba(255,255,255,0.7);"></div>
<div class="a" style="left:83px;top:682px;width:1px;height:27px;background:rgba(255,255,255,0.85);"></div>
<div class="a" style="left:3px;top:682px;width:80px;height:1px;background:rgba(255,255,255,0.5);"></div>
<div class="a" style="left:3px;top:708px;width:80px;height:1px;background:rgba(255,255,255,0.5);"></div>
<div class="t" style="left:2px;top:411px;width:81px;height:39px;color:#333"><span>类型</span></div>
<div class="t" style="left:83px;top:411px;width:76px;height:39px;color:#333"><span>日期</span></div>
<div class="t" style="left:159px;top:411px;width:111px;height:39px;color:#333"><span>主场</span></div>
<div class="t" style="left:270px;top:411px;width:90px;height:39px;color:#333"><span>比分(半场)</span></div>
<div class="t" style="left:360px;top:411px;width:39px;height:39px;color:#333"><span>角球</span></div>
<div class="t" style="left:399px;top:411px;width:112px;height:39px;color:#333"><span>客场</span></div>
<div class="t" style="left:511px;top:431px;width:39px;height:19px;color:#333"><span>主</span></div>
<div class="t" style="left:550px;top:431px;width:104px;height:19px;color:#333"><span>让球</span></div>
<div class="t" style="left:654px;top:431px;width:41px;height:19px;color:#333"><span>客</span></div>
<div class="t" style="left:695px;top:431px;width:75px;height:19px;color:#333"><span>主</span></div>
<div class="t" style="left:770px;top:431px;width:61px;height:19px;color:#333"><span>和</span></div>
<div class="t" style="left:831px;top:431px;width:63px;height:19px;color:#333"><span>客</span></div>
<div class="t" style="left:894px;top:431px;width:38px;height:19px;color:#333"><span>胜负</span></div>
<div class="t" style="left:932px;top:431px;width:39px;height:19px;color:#333"><span>让球</span></div>
<div class="t" style="left:971px;top:431px;width:58px;height:19px;color:#333"><span>进球数</span></div>
<div class="t" style="left:2px;top:449px;width:81px;height:26px;color:#fff"><span>澳足总</span></div>
<div class="t" style="left:83px;top:449px;width:76px;height:26px;"><span>24-08-27</span></div>
<div class="t" style="left:159px;top:449px;width:111px;height:26px;"><span>昆士兰狮队</span></div>
<div class="t" style="left:270px;top:449px;width:90px;height:26px;"><span><span class="r">0-4</span>(0-1)</span></div>
<div class="t" style="left:360px;top:449px;width:39px;height:26px;"><span>8-3</span></div>
<div class="t" style="left:399px;top:449px;width:112px;height:26px;"><span><span class="g">西悉尼流浪者</span></span></div>
<div class="t" style="left:511px;top:449px;width:39px;height:26px;"><span>1.00</span></div>
<div class="t" style="left:550px;top:449px;width:104px;height:26px;"><span>受一球</span></div>
<div class="t" style="left:654px;top:449px;width:41px;height:26px;"><span>0.82</span></div>
<div class="t" style="left:695px;top:449px;width:75px;height:26px;"><span>4.42</span></div>
<div class="t" style="left:770px;top:449px;width:61px;height:26px;"><span>4.54</span></div>
<div class="t" style="left:831px;top:449px;width:63px;height:26px;"><span>1.56</span></div>
<div class="t" style="left:894px;top:449px;width:38px;height:26px;"><span><span class="r">胜</span></span></div>
<div class="t" style="left:932px;top:449px;width:39px;height:26px;"><span><span class="r">赢</span></span></div>
<div class="t" style="left:971px;top:449px;width:58px;height:26px;"><span><span class="r">大</span></span></div>
<div class="t" style="left:2px;top:475px;width:81px;height:26px;color:#fff"><span>澳足总</span></div>
<div class="t" style="left:83px;top:475px;width:76px;height:26px;"><span>24-07-31</span></div>
<div class="t" style="left:159px;top:475px;width:111px;height:26px;"><span>布里斯班</span></div>
<div class="t" style="left:270px;top:475px;width:90px;height:26px;"><span><span class="r">1-2</span>(0-2)</span></div>
<div class="t" style="left:360px;top:475px;width:39px;height:26px;"><span>5-5</span></div>
<div class="t" style="left:399px;top:475px;width:112px;height:26px;"><span><span class="g">西悉尼流浪者</span></span></div>
<div class="t" style="left:511px;top:475px;width:39px;height:26px;"><span>0.85</span></div>
<div class="t" style="left:550px;top:475px;width:104px;height:26px;"><span>受两/两球半</span></div>
<div class="t" style="left:654px;top:475px;width:41px;height:26px;"><span>0.91</span></div>
<div class="t" style="left:695px;top:475px;width:75px;height:26px;"><span>10.19</span></div>
<div class="t" style="left:770px;top:475px;width:61px;height:26px;"><span>7.35</span></div>
<div class="t" style="left:831px;top:475px;width:63px;height:26px;"><span>1.17</span></div>
<div class="t" style="left:894px;top:475px;width:38px;height:26px;"><span><span class="r">胜</span></span></div>
<div class="t" style="left:932px;top:475px;width:39px;height:26px;"><span><span class="b">输</span></span></div>
<div class="t" style="left:971px;top:475px;width:58px;height:26px;"><span><span class="b">小</span></span></div>
<div class="t" style="left:2px;top:501px;width:81px;height:26px;color:#fff"><span>澳洲甲</span></div>
<div class="t" style="left:83px;top:501px;width:76px;height:26px;"><span>24-04-27</span></div>
<div class="t" style="left:159px;top:501px;width:111px;height:26px;"><span>墨尔本胜利</span></div>
<div class="t" style="left:270px;top:501px;width:90px;height:26px;"><span><span class="r">3-4</span>(2-2)</span></div>
<div class="t" style="left:360px;top:501px;width:39px;height:26px;"><span>4-7</span></div>
<div class="t" style="left:399px;top:501px;width:112px;height:26px;"><span><span class="g">西悉尼流浪者</span></span></div>
<div class="t" style="left:511px;top:501px;width:39px;height:26px;"><span>0.85</span></div>
<div class="t" style="left:550px;top:501px;width:104px;height:26px;"><span>半球</span></div>
<div class="t" style="left:654px;top:501px;width:41px;height:26px;"><span>1.03</span></div>
<div class="t" style="left:695px;top:501px;width:75px;height:26px;"><span>1.88</span></div>
<div class="t" style="left:770px;top:501px;width:61px;height:26px;"><span>3.91</span></div>
<div class="t" style="left:831px;top:501px;width:63px;height:26px;"><span>3.51</span></div>
<div class="t" style="left:894px;top:501px;width:38px;height:26px;"><span><span class="r">胜</span></span></div>
<div class="t" style="left:932px;top:501px;width:39px;height:26px;"><span><span class="r">赢</span></span></div>
<div class="t" style="left:971px;top:501px;width:58px;height:26px;"><span><span class="r">大</span></span></div>
<div class="t" style="left:2px;top:527px;width:81px;height:26px;color:#fff"><span>澳洲甲</span></div>
<div class="t" style="left:83px;top:527px;width:76px;height:26px;"><span>24-04-20</span></div>
<div class="t" style="left:159px;top:527px;width:111px;height:26px;"><span><span class="g">西悉尼流浪者</span></span></div>
<div class="t" style="left:270px;top:527px;width:90px;height:26px;"><span><span class="r">1-2</span>(0-2)</span></div>
<div class="t" style="left:360px;top:527px;width:39px;height:26px;"><span>6-4</span></div>
<div class="t" style="left:399px;top:527px;width:112px;height:26px;"><span>墨尔本城</span></div>
<div class="t" style="left:511px;top:527px;width:39px;height:26px;"><span>0.92</span></div>
<div class="t" style="left:550px;top:527px;width:104px;height:26px;"><span>受半球</span></div>
<div class="t" style="left:654px;top:527px;width:41px;height:26px;"><span>0.97</span></div>
<div class="t" style="left:695px;top:527px;width:75px;height:26px;"><span>3.30</span></div>
<div class="t" style="left:770px;top:527px;width:61px;height:26px;"><span>3.90</span></div>
<div class="t" style="left:831px;top:527px;width:63px;height:26px;"><span>1.94</span></div>
<div class="t" style="left:894px;top:527px;width:38px;height:26px;"><span><span class="b">负</span></span></div>
<div class="t" style="left:932px;top:527px;width:39px;height:26px;"><span><span class="b">输</span></span></div>
<div class="t" style="left:971px;top:527px;width:58px;height:26px;"><span><span class="b">小</span></span></div>
<div class="t" style="left:2px;top:553px;width:81px;height:26px;color:#fff"><span>澳洲甲</span></div>
<div class="t" style="left:83px;top:553px;width:76px;height:26px;"><span>24-04-13</span></div>
<div class="t" style="left:159px;top:553px;width:111px;height:26px;"><span>悉尼FC</span></div>
<div class="t" style="left:270px;top:553px;width:90px;height:26px;"><span><span class="r">2-1</span>(0-0)</span></div>
<div class="t" style="left:360px;top:553px;width:39px;height:26px;"><span>10-2</span></div>
<div class="t" style="left:399px;top:553px;width:112px;height:26px;"><span><span class="g">西悉尼流浪者</span></span></div>
<div class="t" style="left:511px;top:553px;width:39px;height:26px;"><span>0.86</span></div>
<div class="t" style="left:550px;top:553px;width:104px;height:26px;"><span>半/一</span></div>
<div class="t" style="left:654px;top:553px;width:41px;height:26px;"><span>1.04</span></div>
<div class="t" style="left:695px;top:553px;width:75px;height:26px;"><span>1.64</span></div>
<div class="t" style="left:770px;top:553px;width:61px;height:26px;"><span>4.26</span></div>
<div class="t" style="left:831px;top:553px;width:63px;height:26px;"><span>4.33</span></div>
<div class="t" style="left:894px;top:553px;width:38px;height:26px;"><span><span class="b">负</span></span></div>
<div class="t" style="left:932px;top:553px;width:39px;height:26px;"><span><span class="b">输</span></span></div>
<div class="t" style="left:971px;top:553px;width:58px;height:26px;"><span><span class="b">小</span></span></div>
<div class="t" style="left:2px;top:579px;width:81px;height:26px;color:#fff"><span>澳洲甲</span></div>
<div class="t" style="left:83px;top:579px;width:76px;height:26px;"><span>24-04-05</span></div>
<div class="t" style="left:159px;top:579px;width:111px;height:26px;"><span><span class="g">西悉尼流浪者</span></span></div>
<div class="t" style="left:270px;top:579px;width:90px;height:26px;"><span><span class="r">1-2</span>(0-1)</span></div>
<div class="t" style="left:360px;top:579px;width:39px;height:26px;"><span>6-7</span></div>
<div class="t" style="left:399px;top:579px;width:112px;height:26px;"><span>布里斯班狮吼</span></div>
<div class="t" style="left:511px;top:579px;width:39px;height:26px;"><span>0.84</span></div>
<div class="t" style="left:550px;top:579px;width:104px;height:26px;"><span>平手</span></div>
<div class="t" style="left:654px;top:579px;width:41px;height:26px;"><span>1.06</span></div>
<div class="t" style="left:695px;top:579px;width:75px;height:26px;"><span>2.29</span></div>
<div class="t" style="left:770px;top:579px;width:61px;height:26px;"><span>3.76</span></div>
<div class="t" style="left:831px;top:579px;width:63px;height:26px;"><span>2.70</span></div>
<div class="t" style="left:894px;top:579px;width:38px;height:26px;"><span><span class="b">负</span></span></div>
<div class="t" style="left:932px;top:579px;width:39px;height:26px;"><span><span class="b">输</span></span></div>
<div class="t" style="left:971px;top:579px;width:58px;height:26px;"><span><span class="b">小</span></span></div>
<div class="t" style="left:2px;top:605px;width:81px;height:26px;color:#fff"><span>澳洲甲</span></div>
<div class="t" style="left:83px;top:605px;width:76px;height:26px;"><span>24-04-01</span></div>
<div class="t" style="left:159px;top:605px;width:111px;height:26px;"><span>麦克阿瑟FC</span></div>
<div class="t" style="left:270px;top:605px;width:90px;height:26px;"><span><span class="r">1-3</span>(0-0)</span></div>
<div class="t" style="left:360px;top:605px;width:39px;height:26px;"><span>17-1</span></div>
<div class="t" style="left:399px;top:605px;width:112px;height:26px;"><span><span class="g">西悉尼流浪者</span></span></div>
<div class="t" style="left:511px;top:605px;width:39px;height:26px;"><span>0.99</span></div>
<div class="t" style="left:550px;top:605px;width:104px;height:26px;"><span>平手</span></div>
<div class="t" style="left:654px;top:605px;width:41px;height:26px;"><span>0.90</span></div>
<div class="t" style="left:695px;top:605px;width:75px;height:26px;"><span>2.56</span></div>
<div class="t" style="left:770px;top:605px;width:61px;height:26px;"><span>3.71</span></div>
<div class="t" style="left:831px;top:605px;width:63px;height:26px;"><span>2.42</span></div>
<div class="t" style="left:894px;top:605px;width:38px;height:26px;"><span><span class="r">胜</span></span></div>
<div class="t" style="left:932px;top:605px;width:39px;height:26px;"><span><span class="r">赢</span></span></div>
<div class="t" style="left:971px;top:605px;width:58px;height:26px;"><span><span class="r">大</span></span></div>
<div class="t" style="left:2px;top:631px;width:81px;height:26px;color:#fff"><span>澳洲甲</span></div>
<div class="t" style="left:83px;top:631px;width:76px;height:26px;"><span>24-03-16</span></div>
<div class="t" style="left:159px;top:631px;width:111px;height:26px;"><span>珀斯光荣</span></div>
<div class="t" style="left:270px;top:631px;width:90px;height:26px;"><span><span class="r">1-2</span>(1-1)</span></div>
<div class="t" style="left:360px;top:631px;width:39px;height:26px;"><span>14-9</span></div>
<div class="t" style="left:399px;top:631px;width:112px;height:26px;"><span><span class="g">西悉尼流浪者</span></span></div>
<div class="t" style="left:511px;top:631px;width:39px;height:26px;"><span>1.04</span></div>
<div class="t" style="left:550px;top:631px;width:104px;height:26px;"><span>平手</span></div>
<div class="t" style="left:654px;top:631px;width:41px;height:26px;"><span>0.86</span></div>
<div class="t" style="left:695px;top:631px;width:75px;height:26px;"><span>2.44</span></div>
<div class="t" style="left:770px;top:631px;width:61px;height:26px;"><span>3.80</span></div>
<div class="t" style="left:831px;top:631px;width:63px;height:26px;"><span>2.50</span></div>
<div class="t" style="left:894px;top:631px;width:38px;height:26px;"><span><span class="r">胜</span></span></div>
<div class="t" style="left:932px;top:631px;width:39px;height:26px;"><span><span class="r">赢</span></span></div>
<div class="t" style="left:971px;top:631px;width:58px;height:26px;"><span><span class="b">小</span></span></div>
<div class="t" style="left:2px;top:657px;width:81px;height:26px;color:#fff"><span>澳洲甲</span></div>
<div class="t" style="left:83px;top:657px;width:76px;height:26px;"><span>24-03-12</span></div>
<div class="t" style="left:159px;top:657px;width:111px;height:26px;"><span>墨尔本城</span></div>
<div class="t" style="left:270px;top:657px;width:90px;height:26px;"><span><span class="r">7-0</span>(4-0)</span></div>
<div class="t" style="left:360px;top:657px;width:39px;height:26px;"><span>8-2</span></div>
<div class="t" style="left:399px;top:657px;width:112px;height:26px;"><span><span class="g">西悉尼流浪者</span></span></div>
<div class="t" style="left:511px;top:657px;width:39px;height:26px;"><span>0.91</span></div>
<div class="t" style="left:550px;top:657px;width:104px;height:26px;"><span>半球</span></div>
<div class="t" style="left:654px;top:657px;width:41px;height:26px;"><span>0.98</span></div>
<div class="t" style="left:695px;top:657px;width:75px;height:26px;"><span>1.90</span></div>
<div class="t" style="left:770px;top:657px;width:61px;height:26px;"><span>3.75</span></div>
<div class="t" style="left:831px;top:657px;width:63px;height:26px;"><span>3.58</span></div>
<div class="t" style="left:894px;top:657px;width:38px;height:26px;"><span><span class="b">负</span></span></div>
<div class="t" style="left:932px;top:657px;width:39px;height:26px;"><span><span class="b">输</span></span></div>
<div class="t" style="left:971px;top:657px;width:58px;height:26px;"><span><span class="r">大</span></span></div>
<div class="t" style="left:2px;top:683px;width:81px;height:26px;color:#fff"><span>澳洲甲</span></div>
<div class="t" style="left:83px;top:683px;width:76px;height:26px;"><span>24-03-08</span></div>
<div class="t" style="left:159px;top:683px;width:111px;height:26px;"><span><span class="g">西悉尼流浪者</span></span></div>
<div class="t" style="left:270px;top:683px;width:90px;height:26px;"><span><span class="r">1-3</span>(0-0)</span></div>
<div class="t" style="left:360px;top:683px;width:39px;height:26px;"><span>0-7</span></div>
<div class="t" style="left:399px;top:683px;width:112px;height:26px;"><span>西部联</span></div>
<div class="t" style="left:511px;top:683px;width:39px;height:26px;"><span>0.97</span></div>
<div class="t" style="left:550px;top:683px;width:104px;height:26px;"><span>半/一</span></div>
<div class="t" style="left:654px;top:683px;width:41px;height:26px;"><span>0.92</span></div>
<div class="t" style="left:695px;top:683px;width:75px;height:26px;"><span>1.68</span></div>
<div class="t" style="left:770px;top:683px;width:61px;height:26px;"><span>4.20</span></div>
<div class="t" style="left:831px;top:683px;width:63px;height:26px;"><span>4.17</span></div>
<div class="t" style="left:894px;top:683px;width:38px;height:26px;"><span><span class="b">负</span></span></div>
<div class="t" style="left:932px;top:683px;width:39px;height:26px;"><span><span class="b">输</span></span></div>
<div class="t" style="left:971px;top:683px;width:58px;height:26px;"><span><span class="r">大</span></span></div>
<div class="t" style="left:2px;top:709px;width:1027px;height:26px;letter-spacing:0.22px"><span>近<span class="r">10</span>场,胜5平0负5, 胜率:<span class="r">50%</span> 让胜率:<span class="r">40%</span> 大率:<span class="r">50%</span> 单率:<span class="r">70%</span></span></div>
<div class="a" style="left:22px;top:37px;height:24px;line-height:24px;font-size:12px;font-weight:bold;color:#222;white-space:nowrap">阿德莱德联</div>
<div class="a" style="left:22px;top:387px;height:25px;line-height:25px;font-size:12px;font-weight:bold;color:#222;white-space:nowrap">西悉尼流浪者</div>
<div class="a" style="left:419px;top:36px;height:24px;line-height:24px;font-size:12px;color:#2a2a2a;white-space:nowrap;color:#333">近</div>
<div class="a" style="left:435px;top:39px;width:38px;height:17px;background:#fff;box-sizing:border-box;border:1px solid #767676;border-radius:1.5px;"></div>
<svg class="a" style="left:435px;top:39px" width="24" height="17" viewBox="0 0 24 17"><path d="M8.3,4.3 V12.6 M6.8,12.6 H9.9 M6.9,5.9 L8.3,4.4" fill="none" stroke="#000" stroke-width="1.25"/><rect x="13.6" y="4.6" width="4.0" height="7.8" rx="1.6" fill="none" stroke="#000" stroke-width="1.25"/></svg>
<svg class="a" style="left:454.9px;top:39.4px" width="16" height="16" viewBox="0 0 16 16"><polyline points="3.9,6 8,10.1 12.1,6" fill="none" stroke="#000" stroke-width="2"/></svg>
<div class="a" style="left:477px;top:36px;height:24px;line-height:24px;font-size:12px;color:#2a2a2a;white-space:nowrap;color:#333">场</div>
<div class="a" style="left:493px;top:39px;width:13px;height:13px;box-sizing:border-box;background:#fff;border:1px solid #767676;border-radius:2px"></div>
<div class="a" style="left:510px;top:36px;height:24px;line-height:24px;font-size:12px;color:#2a2a2a;white-space:nowrap;color:#333">同主</div>
<div class="a" style="left:533px;top:39px;width:13px;height:13px;background:#1973E8;border-radius:2px"></div>
<svg class="a" style="left:533px;top:39px" width="13" height="13" viewBox="0 0 13 13"><polyline points="2.6,6.6 5.2,9.4 10.4,3.3" fill="none" stroke="#fff" stroke-width="2.1"/></svg>
<div class="a" style="left:546px;top:36px;height:24px;line-height:24px;font-size:12px;color:#2a2a2a;white-space:nowrap;color:#333">澳足总</div>
<div class="a" style="left:582px;top:39px;width:13px;height:13px;background:#1973E8;border-radius:2px"></div>
<svg class="a" style="left:582px;top:39px" width="13" height="13" viewBox="0 0 13 13"><polyline points="2.6,6.6 5.2,9.4 10.4,3.3" fill="none" stroke="#fff" stroke-width="2.1"/></svg>
<div class="a" style="left:595px;top:36px;height:24px;line-height:24px;font-size:12px;color:#2a2a2a;white-space:nowrap;color:#333">球会友谊</div>
<div class="a" style="left:643px;top:39px;width:13px;height:13px;background:#1973E8;border-radius:2px"></div>
<svg class="a" style="left:643px;top:39px" width="13" height="13" viewBox="0 0 13 13"><polyline points="2.6,6.6 5.2,9.4 10.4,3.3" fill="none" stroke="#fff" stroke-width="2.1"/></svg>
<div class="a" style="left:656px;top:36px;height:24px;line-height:24px;font-size:12px;color:#2a2a2a;white-space:nowrap;color:#333">澳洲甲</div>
<div class="a" style="left:558px;top:59px;width:61px;height:19px;background:#fff;box-sizing:border-box;border:1px solid #767676;border-radius:1.5px;"></div>
<div class="a" style="left:563px;top:59px;height:19px;line-height:19px;font-size:13px;font-family:'Liberation Sans', sans-serif;color:#000;white-space:nowrap">Crow*</div>
<svg class="a" style="left:600.9px;top:60.400000000000006px" width="16" height="16" viewBox="0 0 16 16"><polyline points="3.9,6 8,10.1 12.1,6" fill="none" stroke="#000" stroke-width="2"/></svg>
<div class="a" style="left:627px;top:59px;width:51px;height:19px;background:#fff;box-sizing:border-box;border:1px solid #767676;border-radius:1.5px;"></div>
<div class="a" style="left:632px;top:59px;height:19px;line-height:19px;font-size:13px;font-family:'Liberation Sans', sans-serif;color:#000;white-space:nowrap">终指</div>
<svg class="a" style="left:659.9px;top:60.400000000000006px" width="16" height="16" viewBox="0 0 16 16"><polyline points="3.9,6 8,10.1 12.1,6" fill="none" stroke="#000" stroke-width="2"/></svg>
<div class="a" style="left:739px;top:59px;width:70px;height:19px;background:#fff;box-sizing:border-box;border:1px solid #767676;border-radius:1.5px;"></div>
<div class="a" style="left:744px;top:59px;height:19px;line-height:19px;font-size:13px;font-family:'Liberation Sans', sans-serif;color:#000;white-space:nowrap">平均值</div>
<svg class="a" style="left:790.9px;top:60.400000000000006px" width="16" height="16" viewBox="0 0 16 16"><polyline points="3.9,6 8,10.1 12.1,6" fill="none" stroke="#000" stroke-width="2"/></svg>
<div class="a" style="left:816px;top:59px;width:51px;height:19px;background:#fff;box-sizing:border-box;border:1px solid #767676;border-radius:1.5px;"></div>
<div class="a" style="left:821px;top:59px;height:19px;line-height:19px;font-size:13px;font-family:'Liberation Sans', sans-serif;color:#000;white-space:nowrap">终指</div>
<svg class="a" style="left:848.9px;top:60.400000000000006px" width="16" height="16" viewBox="0 0 16 16"><polyline points="3.9,6 8,10.1 12.1,6" fill="none" stroke="#000" stroke-width="2"/></svg>
<div class="a" style="left:939px;top:59px;width:51px;height:19px;background:#fff;box-sizing:border-box;border:1px solid #767676;border-radius:1.5px;"></div>
<div class="a" style="left:944px;top:59px;height:19px;line-height:19px;font-size:13px;font-family:'Liberation Sans', sans-serif;color:#000;white-space:nowrap">全场</div>
<svg class="a" style="left:971.9px;top:60.400000000000006px" width="16" height="16" viewBox="0 0 16 16"><polyline points="3.9,6 8,10.1 12.1,6" fill="none" stroke="#000" stroke-width="2"/></svg>
<div class="a" style="left:453px;top:387px;height:25px;line-height:25px;font-size:12px;color:#2a2a2a;white-space:nowrap;color:#333">近</div>
<div class="a" style="left:469px;top:390px;width:38px;height:17px;background:#fff;box-sizing:border-box;border:1px solid #767676;border-radius:1.5px;"></div>
<svg class="a" style="left:469px;top:390px" width="24" height="17" viewBox="0 0 24 17"><path d="M8.3,4.3 V12.6 M6.8,12.6 H9.9 M6.9,5.9 L8.3,4.4" fill="none" stroke="#000" stroke-width="1.25"/><rect x="13.6" y="4.6" width="4.0" height="7.8" rx="1.6" fill="none" stroke="#000" stroke-width="1.25"/></svg>
<svg class="a" style="left:488.9px;top:390.4px" width="16" height="16" viewBox="0 0 16 16"><polyline points="3.9,6 8,10.1 12.1,6" fill="none" stroke="#000" stroke-width="2"/></svg>
<div class="a" style="left:511px;top:387px;height:25px;line-height:25px;font-size:12px;color:#2a2a2a;white-space:nowrap;color:#333">场</div>
<div class="a" style="left:527px;top:390px;width:13px;height:13px;box-sizing:border-box;background:#fff;border:1px solid #767676;border-radius:2px"></div>
<div class="a" style="left:544px;top:387px;height:25px;line-height:25px;font-size:12px;color:#2a2a2a;white-space:nowrap;color:#333">同客</div>
<div class="a" style="left:572px;top:390px;width:13px;height:13px;background:#1973E8;border-radius:2px"></div>
<svg class="a" style="left:572px;top:390px" width="13" height="13" viewBox="0 0 13 13"><polyline points="2.6,6.6 5.2,9.4 10.4,3.3" fill="none" stroke="#fff" stroke-width="2.1"/></svg>
<div class="a" style="left:585px;top:387px;height:25px;line-height:25px;font-size:12px;color:#2a2a2a;white-space:nowrap;color:#333">澳足总</div>
<div class="a" style="left:621px;top:390px;width:13px;height:13px;background:#1973E8;border-radius:2px"></div>
<svg class="a" style="left:621px;top:390px" width="13" height="13" viewBox="0 0 13 13"><polyline points="2.6,6.6 5.2,9.4 10.4,3.3" fill="none" stroke="#fff" stroke-width="2.1"/></svg>
<div class="a" style="left:634px;top:387px;height:25px;line-height:25px;font-size:12px;color:#2a2a2a;white-space:nowrap;color:#333">澳洲甲</div>
<div class="a" style="left:543px;top:410px;width:61px;height:19px;background:#fff;box-sizing:border-box;border:1px solid #767676;border-radius:1.5px;"></div>
<div class="a" style="left:548px;top:410px;height:19px;line-height:19px;font-size:13px;font-family:'Liberation Sans', sans-serif;color:#000;white-space:nowrap">Crow*</div>
<svg class="a" style="left:585.9px;top:411.4px" width="16" height="16" viewBox="0 0 16 16"><polyline points="3.9,6 8,10.1 12.1,6" fill="none" stroke="#000" stroke-width="2"/></svg>
<div class="a" style="left:612px;top:410px;width:51px;height:19px;background:#fff;box-sizing:border-box;border:1px solid #767676;border-radius:1.5px;"></div>
<div class="a" style="left:617px;top:410px;height:19px;line-height:19px;font-size:13px;font-family:'Liberation Sans', sans-serif;color:#000;white-space:nowrap">终指</div>
<svg class="a" style="left:644.9px;top:411.4px" width="16" height="16" viewBox="0 0 16 16"><polyline points="3.9,6 8,10.1 12.1,6" fill="none" stroke="#000" stroke-width="2"/></svg>
<div class="a" style="left:730px;top:410px;width:70px;height:19px;background:#fff;box-sizing:border-box;border:1px solid #767676;border-radius:1.5px;"></div>
<div class="a" style="left:735px;top:410px;height:19px;line-height:19px;font-size:13px;font-family:'Liberation Sans', sans-serif;color:#000;white-space:nowrap">平均值</div>
<svg class="a" style="left:781.9px;top:411.4px" width="16" height="16" viewBox="0 0 16 16"><polyline points="3.9,6 8,10.1 12.1,6" fill="none" stroke="#000" stroke-width="2"/></svg>
<div class="a" style="left:808px;top:410px;width:51px;height:19px;background:#fff;box-sizing:border-box;border:1px solid #767676;border-radius:1.5px;"></div>
<div class="a" style="left:813px;top:410px;height:19px;line-height:19px;font-size:13px;font-family:'Liberation Sans', sans-serif;color:#000;white-space:nowrap">终指</div>
<svg class="a" style="left:840.9px;top:411.4px" width="16" height="16" viewBox="0 0 16 16"><polyline points="3.9,6 8,10.1 12.1,6" fill="none" stroke="#000" stroke-width="2"/></svg>
<div class="a" style="left:937px;top:410px;width:50px;height:19px;background:#fff;box-sizing:border-box;border:1px solid #767676;border-radius:1.5px;"></div>
<div class="a" style="left:942px;top:410px;height:19px;line-height:19px;font-size:13px;font-family:'Liberation Sans', sans-serif;color:#000;white-space:nowrap">全场</div>
<svg class="a" style="left:968.9px;top:411.4px" width="16" height="16" viewBox="0 0 16 16"><polyline points="3.9,6 8,10.1 12.1,6" fill="none" stroke="#000" stroke-width="2"/></svg>
</body></html>
